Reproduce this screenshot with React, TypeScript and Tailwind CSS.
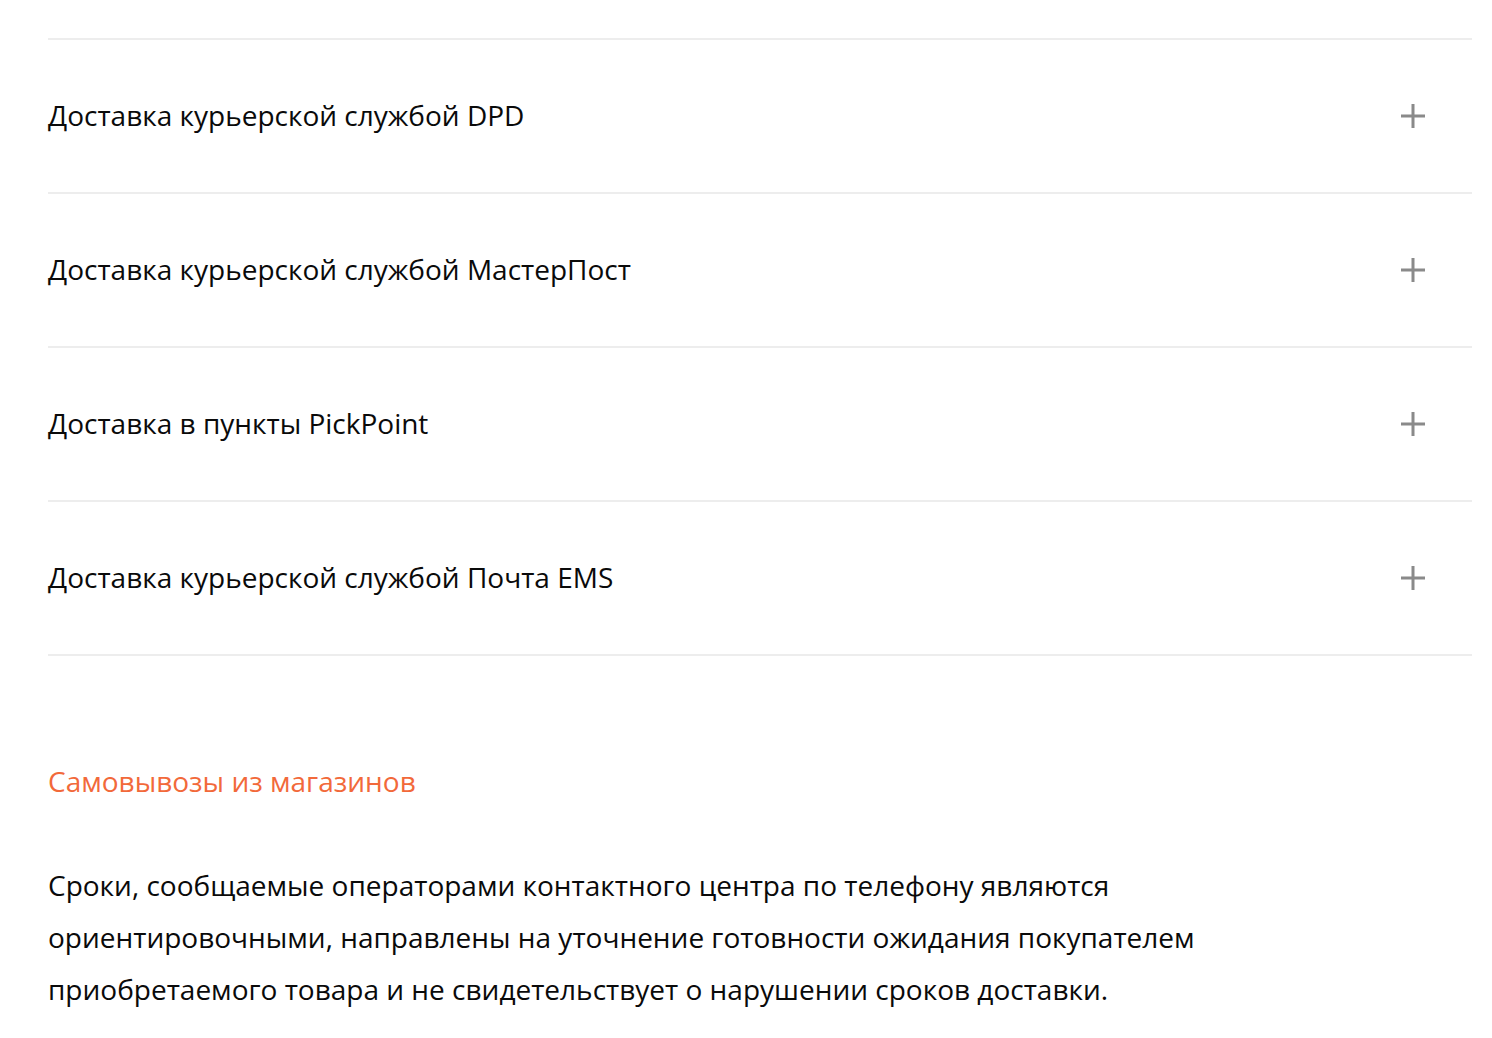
import React from "react";

const items = [
  "Доставка курьерской службой DPD",
  "Доставка курьерской службой МастерПост",
  "Доставка в пункты PickPoint",
  "Доставка курьерской службой Почта EMS",
];

function Plus() {
  return (
    <svg width="24" height="24" viewBox="0 0 24 24" className="shrink-0">
      <rect x="10.5" y="0" width="3" height="24" fill="#8a8a8a" />
      <rect x="0" y="10.5" width="24" height="3" fill="#8a8a8a" />
    </svg>
  );
}

export default function App() {
  return (
    <div
      className="min-h-screen bg-white pl-[48px] pr-[20px] pt-[38px]"
      style={{ fontFamily: '"Open Sans", "Noto Sans", sans-serif' }}
    >
      <div className="border-t-2 border-[#ededed]">
        {items.map((t) => (
          <div
            key={t}
            className="flex h-[154px] items-center justify-between border-b-2 border-[#ededed] pr-[47px]"
          >
            <span className="mb-[2px] text-[28px] text-[#0a0a0a]">{t}</span>
            <Plus />
          </div>
        ))}
      </div>
      <div className="mt-[107px] text-[28px] leading-[36px] text-[#f2693a]">
        Самовывозы из магазинов
      </div>
      <p className="mt-[60px] max-w-[1180px] text-[28px] leading-[52px] text-[#0a0a0a]">
        Сроки, сообщаемые операторами контактного центра по телефону являются
        ориентировочными, направлены на уточнение готовности ожидания покупателем
        приобретаемого товара и не свидетельствует о нарушении сроков доставки.
      </p>
    </div>
  );
}
